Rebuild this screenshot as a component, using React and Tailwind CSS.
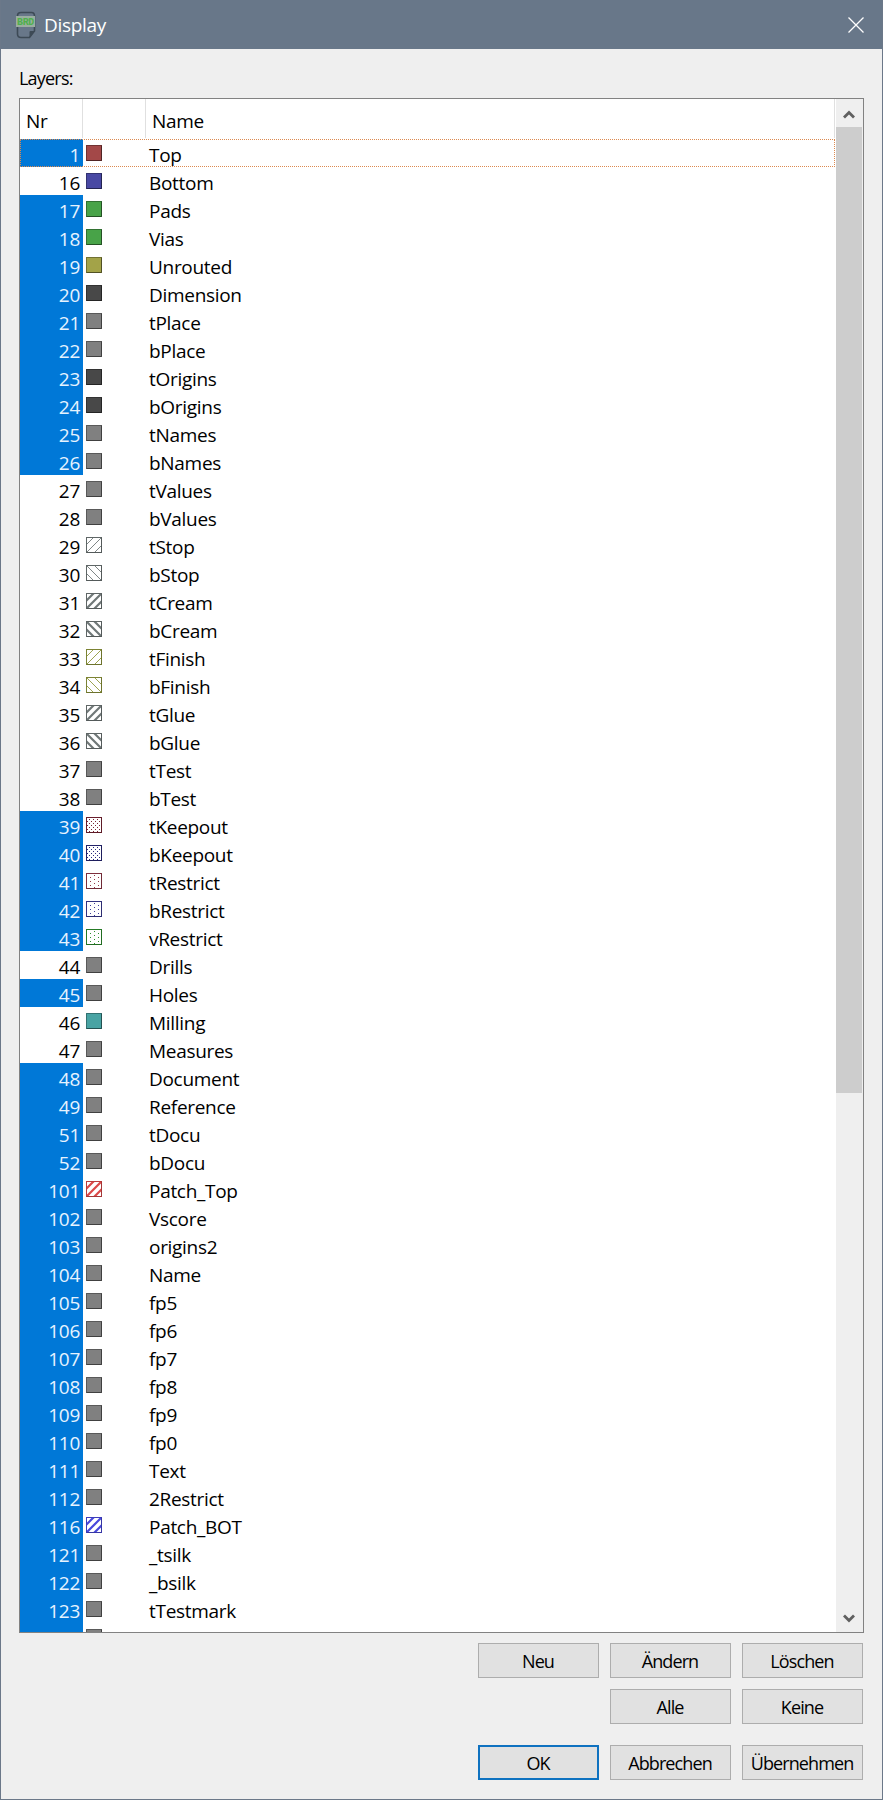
const rows = [
  [1, 'Top', 1, '#a34848'], [16, 'Bottom', 0, '#4848a3'], [17, 'Pads', 1, '#48a348'], [18, 'Vias', 1, '#48a348'],
  [19, 'Unrouted', 1, '#a3a348'], [20, 'Dimension', 1, '#484848'], [21, 'tPlace', 1, '#808080'], [22, 'bPlace', 1, '#808080'],
  [23, 'tOrigins', 1, '#484848'], [24, 'bOrigins', 1, '#484848'], [25, 'tNames', 1, '#808080'], [26, 'bNames', 1, '#808080'],
  [27, 'tValues', 0, '#808080'], [28, 'bValues', 0, '#808080'],
  [29, 'tStop', 0, '#707878', 'thin/'], [30, 'bStop', 0, '#707878', 'thin\\'],
  [31, 'tCream', 0, '#707878', 'thick/'], [32, 'bCream', 0, '#707878', 'thick\\'],
  [33, 'tFinish', 0, '#929a3c', 'thin/'], [34, 'bFinish', 0, '#929a3c', 'thin\\'],
  [35, 'tGlue', 0, '#707878', 'thick/'], [36, 'bGlue', 0, '#707878', 'thick\\'],
  [37, 'tTest', 0, '#808080'], [38, 'bTest', 0, '#808080'],
  [39, 'tKeepout', 1, '#7c2434', 'dense'], [40, 'bKeepout', 1, '#28287c', 'dense'],
  [41, 'tRestrict', 1, '#943848', 'sparse'], [42, 'bRestrict', 1, '#3c3c98', 'sparse'], [43, 'vRestrict', 1, '#2c902c', 'sparse'],
  [44, 'Drills', 0, '#808080'], [45, 'Holes', 1, '#808080'], [46, 'Milling', 0, '#48a3a3'], [47, 'Measures', 0, '#808080'],
  [48, 'Document', 1, '#808080'], [49, 'Reference', 1, '#808080'], [51, 'tDocu', 1, '#808080'], [52, 'bDocu', 1, '#808080'],
  [101, 'Patch_Top', 1, '#dc4848', 'thick/'], [102, 'Vscore', 1, '#808080'], [103, 'origins2', 1, '#808080'],
  [104, 'Name', 1, '#808080'], [105, 'fp5', 1, '#808080'], [106, 'fp6', 1, '#808080'], [107, 'fp7', 1, '#808080'],
  [108, 'fp8', 1, '#808080'], [109, 'fp9', 1, '#808080'], [110, 'fp0', 1, '#808080'], [111, 'Text', 1, '#808080'],
  [112, '2Restrict', 1, '#808080'], [116, 'Patch_BOT', 1, '#4848dc', 'thick/'], [121, '_tsilk', 1, '#808080'],
  [122, '_bsilk', 1, '#808080'], [123, 'tTestmark', 1, '#808080'], [124, 'bTestmark', 1, '#808080'],
];

function Swatch({ color, pattern }) {
  const dots = [];
  if (pattern === 'dense')
    for (let y = 2; y < 15; y += 2) for (let x = 2 + (y % 4); x < 15; x += 4) dots.push([x - 1, y]);
  if (pattern === 'sparse')
    for (let x = 4; x < 15; x += 4) for (let y = x === 8 ? 2 : 4; y < 15; y += 4) dots.push([x, y]);
  const hatch = pattern && (pattern.startsWith('thin') || pattern.startsWith('thick'));
  const back = pattern && pattern.endsWith('\\');
  return (
    <svg className="block" width="16" height="16" viewBox="0 0 16 16">
      <rect width="16" height="16" fill={pattern ? '#fff' : color} />
      {hatch && (
        <path
          d="M0 8L8 0M0 16L16 0M8 16L16 8"
          stroke={color}
          strokeWidth={pattern.startsWith('thick') ? 2.2 : 0.9}
          transform={back ? 'matrix(-1 0 0 1 16 0)' : undefined}
        />
      )}
      {dots.map(([x, y]) => <rect key={x + '-' + y} x={x} y={y} width="1" height="1" fill={color} />)}
      <rect x=".5" y=".5" width="15" height="15" fill="none" stroke={color} />
      <path d="M.5 15.500V.5H15.500" fill="none" stroke="#000" strokeOpacity={pattern ? 0.15 : 0.3} />
      <path d="M.5 15.500H15.500V.5" fill="none" stroke="#000" strokeOpacity={pattern ? 0.25 : 0.5} />
    </svg>
  );
}

function Row({ row: [nr, name, selected, color, pattern], focused }) {
  return (
    <div className="relative flex h-7 shrink-0">
      <div className={selected ? 'w-[63px] bg-[#0078d7] pr-[3px] text-right leading-[32px] text-[#e6f3ff]' : 'w-[63px] pr-[3px] text-right leading-[32px]'}>{nr}</div>
      <div className="w-[66px] pt-[6px] pl-[3px]"><Swatch color={color} pattern={pattern} /></div>
      <div className="leading-[32px] whitespace-nowrap">{name}</div>
      {focused && <div className="absolute inset-y-0 right-px left-0 border border-dotted border-[#dc8a50]" />}
    </div>
  );
}

function Button({ children, primary }) {
  return (
    <button className={(primary ? 'border-2 border-[#0f72c0] ' : 'border border-[#adadad] ') + 'flex h-[35px] w-[121px] items-center justify-center bg-[#e1e1e1] pt-[2px] pr-px text-[18px] tracking-[-0.9px] whitespace-nowrap text-black'}>
      {children}
    </button>
  );
}

function Arrow({ down }) {
  return (
    <svg className={down ? 'rotate-180' : ''} width="12" height="10" viewBox="0 0 12 10">
      <path d="M1 7.5L6 2.5L11 7.5" fill="none" stroke="#606060" strokeWidth="2.8" />
    </svg>
  );
}

export default function App() {
  return (
    <div className="flex h-[1800px] w-[883px] flex-col border border-t-0 border-[#6b7889] bg-[#efefef] font-['Open_Sans','Noto_Sans',sans-serif] text-[19px] tracking-[-0.3px] text-black">
      <header className="flex h-[49px] shrink-0 items-center bg-[#687789] pr-[18px] pl-[15px] text-white">
        <svg width="20" height="28" viewBox="0 0 20 28">
          <path d="M1.5 6V5Q1.5 1.5 5 1.5H15.5Q18.5 1.5 18.5 5V20L13.500 26.500H5Q1.500 26.500 1.500 23V16" fill="none" stroke="#3d4a56" strokeWidth="1.6" />
          <path d="M18.500 20L13.500 26.500V21Q13.500 20 14.500 20Z" fill="#3d4a56" />
          <rect x="0" y="5" width="19" height="11" fill="#9aaea0" />
          <text x="1" y="14" fontSize="10.500" fontWeight="bold" textLength="17" lengthAdjust="spacingAndGlyphs" fill="#4fb04c" fontFamily="Liberation Mono, monospace">BRD</text>
        </svg>
        <span className="ml-[8px] grow pt-[2px]">Display</span>
        <svg width="16" height="16" viewBox="0 0 16 16"><path d="M.5 .5L15.500 15.500M15.500 .5L.5 15.500" stroke="#fff" strokeWidth="1.300" /></svg>
      </header>
      <div className="flex h-[49px] shrink-0 items-center pt-[9px] pl-[18px] text-[18px] tracking-[-0.8px]">Layers:</div>
      <main className="mx-[18px] flex h-[1535px] shrink-0 overflow-hidden border border-[#828282] bg-white">
        <div className="flex grow flex-col overflow-hidden">
          <div className="flex h-10 shrink-0 pb-px leading-[44px]">
            <div className="w-[63px] border-r border-[#e0e0e0] pl-[6px]">Nr</div>
            <div className="w-[63px] border-r border-[#e0e0e0]" />
            <div className="mr-px grow border-r border-[#e0e0e0] pl-[6px]">Name</div>
          </div>
          {rows.map((r, i) => <Row key={r[0]} row={r} focused={i === 0} />)}
        </div>
        <div className="flex w-[27px] shrink-0 flex-col items-center bg-[#efefef]">
          <div className="flex h-7 shrink-0 items-center pt-1 pr-px"><Arrow /></div>
          <div className="mr-px h-[966px] w-[26px] bg-[#cdcdcd]" />
          <div className="flex grow items-end pr-px pb-[9px]"><Arrow down /></div>
        </div>
      </main>
      <footer className="grid grid-cols-[repeat(3,121px)] justify-end gap-x-[11px] pt-[10px] pr-[19px]">
        <Button>Neu</Button>
        <Button>Ändern</Button>
        <Button>Löschen</Button>
        <div className="col-start-2 mt-[11px]"><Button>Alle</Button></div>
        <div className="mt-[11px]"><Button>Keine</Button></div>
        <div className="col-start-1 mt-[21px]"><Button primary>OK</Button></div>
        <div className="mt-[21px]"><Button>Abbrechen</Button></div>
        <div className="mt-[21px]"><Button>Übernehmen</Button></div>
      </footer>
    </div>
  );
}
